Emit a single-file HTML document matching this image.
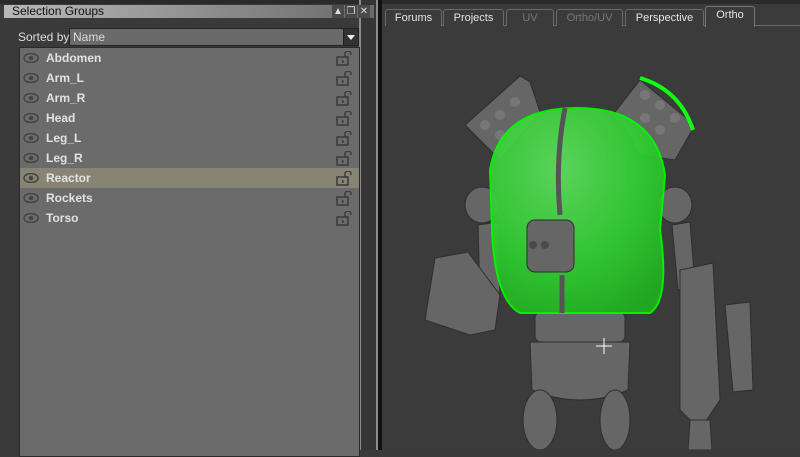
<!DOCTYPE html>
<html><head><meta charset="utf-8"><style>
*{margin:0;padding:0;box-sizing:border-box}
body{width:800px;height:450px;overflow:hidden;background:#3a3a3a;font-family:"Liberation Sans",sans-serif;position:relative}
.top{position:absolute;left:0;top:0;width:800px;height:4px;background:#2a2a2a}
.title{position:absolute;left:4px;top:5px;width:370px;height:13px;background:linear-gradient(90deg,#b8b8b8,#9a9a9a 40%,#6a6a6a);font-size:12px;color:#111;line-height:13px;padding-left:8px;z-index:5}
.tbtn{position:absolute;top:5px;width:12px;height:13px;background:#4a4a4a;color:#ddd;font-size:10px;text-align:center;line-height:13px;z-index:6}
.sort{position:absolute;left:18px;top:30px;font-size:12px;color:#ddd}
.combo{position:absolute;left:69px;top:28px;width:290px;height:18px;background:#6a6a6a;border:1px solid #222;font-size:12px;color:#ddd;line-height:16px;padding-left:3px}
.combo b{position:absolute;right:0;top:0;width:15px;height:16px;background:#333;border-left:1px solid #222}
.combo b:after{content:"";position:absolute;left:3px;top:6px;border:4px solid transparent;border-top:5px solid #eee}
.list{position:absolute;left:19px;top:47px;width:341px;height:410px;background:#6b6b6b;border:1px solid #2a2a2a}
.row{position:absolute;left:0;width:339px;height:20px;font-size:12px;font-weight:bold;color:#e2e2e2;line-height:20px;padding-left:26px}
.row.sel{background:#878474}
.eye{position:absolute;left:3px;top:5px}
.lock{position:absolute;right:6px;top:3px}
.v1{position:absolute;left:359px;top:0;width:2px;height:450px;background:#8a8a8a}
.v2{position:absolute;left:361px;top:0;width:15px;height:450px;background:#353535}
.v3{position:absolute;left:376px;top:0;width:2px;height:450px;background:#8a8a8a}
.v4{position:absolute;left:378px;top:0;width:4px;height:450px;background:#111}
.vp{position:absolute;left:382px;top:4px;width:418px;height:446px;background:#3b3b3b}
.tab{position:absolute;top:9px;height:17px;border:1px solid #6a6a6a;border-bottom:none;border-radius:3px 3px 0 0;font-size:11px;color:#e5e5e5;text-align:center;line-height:16px;background:#3b3b3b}
.tab.d{color:#777}
.tline{position:absolute;left:385px;top:25px;width:415px;height:1px;background:#6a6a6a}
</style></head><body>
<div class="top"></div>
<div class="v1"></div><div class="v2"></div><div class="v3"></div><div class="v4"></div>
<div class="title">Selection Groups</div>
<div class="tbtn" style="left:332px">▲</div><div class="tbtn" style="left:345px">❐</div><div class="tbtn" style="left:358px">✕</div>
<div class="sort">Sorted by</div>
<div class="combo">Name<b></b></div>
<div class="list">
<svg width="0" height="0" style="position:absolute"><defs>
<g id="e"><ellipse cx="8" cy="5" rx="7" ry="4.5" fill="none" stroke="#444" stroke-width="1.5"/><circle cx="8" cy="5" r="2.3" fill="#444"/></g>
<g id="l"><rect x="1" y="6" width="11" height="8" fill="none" stroke="#3a3a3a" stroke-width="1.5"/><rect x="6" y="9" width="1.5" height="3" fill="#3a3a3a"/><path d="M9 6V3a3 3 0 0 1 6 0v1" fill="none" stroke="#3a3a3a" stroke-width="1.5"/></g>
</defs></svg>
<div class="row" style="top:0">Abdomen<svg class="eye" width="16" height="10"><use href="#e"/></svg><svg class="lock" width="17" height="15"><use href="#l"/></svg></div>
<div class="row" style="top:20px">Arm_L<svg class="eye" width="16" height="10"><use href="#e"/></svg><svg class="lock" width="17" height="15"><use href="#l"/></svg></div>
<div class="row" style="top:40px">Arm_R<svg class="eye" width="16" height="10"><use href="#e"/></svg><svg class="lock" width="17" height="15"><use href="#l"/></svg></div>
<div class="row" style="top:60px">Head<svg class="eye" width="16" height="10"><use href="#e"/></svg><svg class="lock" width="17" height="15"><use href="#l"/></svg></div>
<div class="row" style="top:80px">Leg_L<svg class="eye" width="16" height="10"><use href="#e"/></svg><svg class="lock" width="17" height="15"><use href="#l"/></svg></div>
<div class="row" style="top:100px">Leg_R<svg class="eye" width="16" height="10"><use href="#e"/></svg><svg class="lock" width="17" height="15"><use href="#l"/></svg></div>
<div class="row sel" style="top:120px">Reactor<svg class="eye" width="16" height="10"><use href="#e"/></svg><svg class="lock" width="17" height="15"><use href="#l"/></svg></div>
<div class="row" style="top:140px">Rockets<svg class="eye" width="16" height="10"><use href="#e"/></svg><svg class="lock" width="17" height="15"><use href="#l"/></svg></div>
<div class="row" style="top:160px">Torso<svg class="eye" width="16" height="10"><use href="#e"/></svg><svg class="lock" width="17" height="15"><use href="#l"/></svg></div>
</div>
<div class="vp"></div>
<div class="tline"></div>
<div class="tab" style="left:385px;width:57px">Forums</div>
<div class="tab" style="left:443px;width:61px">Projects</div>
<div class="tab d" style="left:506px;width:48px">UV</div>
<div class="tab d" style="left:556px;width:67px">Ortho/UV</div>
<div class="tab" style="left:625px;width:79px">Perspective</div>
<div class="tab" style="left:705px;width:50px;top:6px;height:21px;border-color:#777;background:#3b3b3b;z-index:2">Ortho</div>
<svg style="position:absolute;left:0;top:0" width="800" height="450">
<defs><radialGradient id="g" cx="0.4" cy="0.3" r="0.8"><stop offset="0" stop-color="#5fe05f"/><stop offset="0.6" stop-color="#2fcf2f"/><stop offset="1" stop-color="#1fb01f"/></radialGradient></defs>
<g fill="#666" stroke="#2e2e2e" stroke-width="1">
<path d="M465 125 L520 76 L530 82 L540 112 L500 160 Z"/>
<path d="M615 112 L640 80 L695 125 L675 160 L640 155 Z"/>
<ellipse cx="482" cy="205" rx="17" ry="18"/><ellipse cx="675" cy="205" rx="17" ry="18"/>
<path d="M478 225 L498 222 L500 300 L480 300 Z"/>
<path d="M435 258 L468 252 L500 295 L495 330 L470 335 L425 320 Z"/>
<path d="M672 225 L690 222 L695 285 L678 290 Z"/>
<path d="M680 270 L713 263 L720 400 L700 430 L680 410 Z"/>
<path d="M725 305 L750 302 L753 390 L733 392 Z"/>
<path d="M690 420 L710 420 L712 450 L688 450 Z"/>
<rect x="535" y="312" width="90" height="30" rx="6"/>
<path d="M530 342 L630 342 L628 390 Q580 410 532 390 Z"/>
<ellipse cx="540" cy="420" rx="17" ry="30"/><ellipse cx="615" cy="420" rx="15" ry="30"/>
</g>
<g fill="#777">
<circle cx="500" cy="115" r="5"/><circle cx="515" cy="102" r="5"/><circle cx="485" cy="125" r="5"/><circle cx="500" cy="135" r="5"/>
<circle cx="645" cy="95" r="5"/><circle cx="660" cy="105" r="5"/><circle cx="675" cy="118" r="5"/><circle cx="645" cy="118" r="5"/><circle cx="660" cy="130" r="5"/>
</g>
<path d="M490 170 Q500 108 577 108 Q655 108 665 175 L660 230 Q670 300 650 313 L520 313 Q495 300 492 230 Z" fill="url(#g)" stroke="#0f0" stroke-width="2" opacity="0.92"/>
<path d="M640 78 Q680 90 693 130" fill="none" stroke="#1f1" stroke-width="4"/>
<path d="M565 108 Q555 160 560 215 M562 275 L562 313" stroke="#555" stroke-width="5" fill="none"/>
<rect x="527" y="220" width="47" height="52" rx="8" fill="#666" stroke="#2e2e2e"/>
<circle cx="533" cy="245" r="4" fill="#4a4a4a"/><circle cx="545" cy="245" r="4" fill="#4a4a4a"/>
<path d="M604 338V354M596 346H612" stroke="#fff" stroke-width="1"/>
</svg>
</body></html>
